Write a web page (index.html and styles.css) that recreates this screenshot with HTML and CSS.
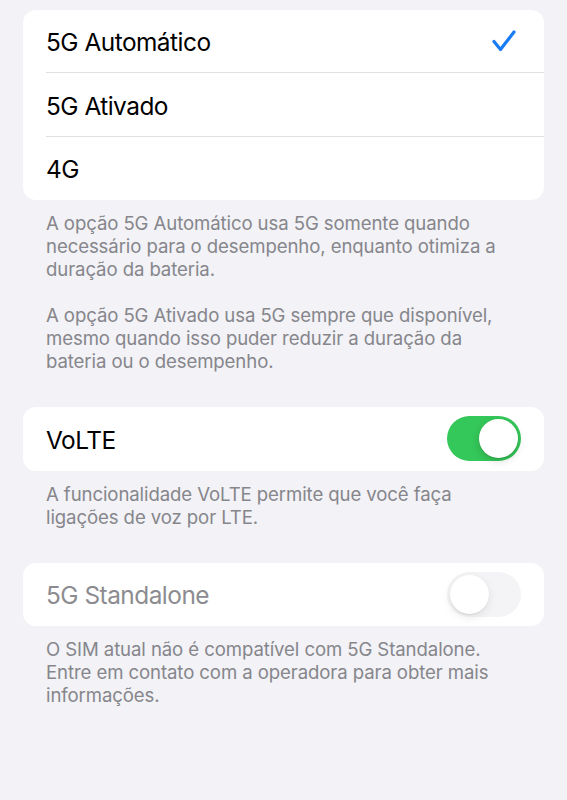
FILE: index.html
```html
<!DOCTYPE html>
<html lang="pt-BR">
  <head>
    <meta charset="UTF-8" />
    <meta name="viewport" content="width=device-width, initial-scale=1.0" />
    <title>Voz e Dados</title>
    <link rel="stylesheet" href="styles.css">
  </head>
  <body>
    <div class="page">
      <ul class="card">
        <li class="row">
          <div class="row-inner">
            <span class="label">5G Automático</span>
            <svg class="check" width="24" height="22" viewBox="0 0 24 22">
              <polyline points="2,11.5 8.5,19.5 22,2" fill="none" stroke="#1a7cf5" stroke-width="3.2" stroke-linecap="round" stroke-linejoin="round" />
            </svg>
          </div>
        </li>
        <li class="row">
          <div class="row-inner">
            <span class="label">5G Ativado</span>
          </div>
        </li>
        <li class="row">
          <div class="row-inner">
            <span class="label">4G</span>
          </div>
        </li>
      </ul>
      <p class="note">
        A opção 5G Automático usa 5G somente quando necessário para o desempenho, enquanto otimiza a duração da bateria.<br><br>A opção 5G Ativado usa 5G sempre que disponível, mesmo quando isso puder reduzir a duração da bateria ou o desempenho.
      </p>

      <ul class="card">
        <li class="row">
          <div class="row-inner">
            <span class="label">VoLTE</span>
            <span class="switch on"><span class="knob"></span></span>
          </div>
        </li>
      </ul>
      <p class="note">
        A funcionalidade VoLTE permite que você faça ligações de voz por LTE.
      </p>

      <ul class="card">
        <li class="row disabled">
          <div class="row-inner">
            <span class="label">5G Standalone</span>
            <span class="switch off"><span class="knob"></span></span>
          </div>
        </li>
      </ul>
      <p class="note">
        O SIM atual não é compatível com 5G Standalone. Entre em contato com a operadora para obter mais informações.
      </p>
    </div>
  </body>
</html>
```

FILE: styles.css
```css
* {
  box-sizing: border-box;
}
body {
  margin: 0;
  background: #f2f2f7;
  font-family: Inter, "Noto Sans", sans-serif;
  color: #000;
  height: 800px;
  overflow: hidden;
}
.page {
  padding: 10px 23px 0;
}
.card {
  list-style: none;
  margin: 0;
  padding: 0;
  background: #fff;
  border-radius: 13px;
  overflow: hidden;
}
.row {
  padding-left: 23px;
}
.row-inner {
  display: flex;
  align-items: center;
  justify-content: space-between;
  height: 63.4px;
  padding-right: 23px;
  border-bottom: 1px solid #e1e1e4;
}
.row:last-child .row-inner {
  border-bottom: none;
}
.label {
  padding-top: 2px;
  font-size: 24.4px;
  letter-spacing: -0.5px;
}
.disabled .label {
  color: #8c8c90;
}
.check {
  margin-right: 5px;
}
.note {
  margin: 12px 0 34px;
  padding: 0 23px;
  font-size: 18.6px;
  line-height: 23px;
  letter-spacing: -0.1px;
  color: #86868b;
}
.switch {
  position: relative;
  width: 74px;
  height: 45px;
  border-radius: 23px;
}
.switch.on {
  background: #34c759;
}
.switch.off {
  background: #ededf0;
  opacity: 0.6;
}
.knob {
  position: absolute;
  top: 3px;
  width: 39px;
  height: 39px;
  border-radius: 50%;
  background: #fff;
  box-shadow: 0 3px 8px rgba(0, 0, 0, 0.15), 0 1px 1px rgba(0, 0, 0, 0.12);
}
.on .knob {
  right: 3px;
}
.off .knob {
  left: 3px;
}
```
